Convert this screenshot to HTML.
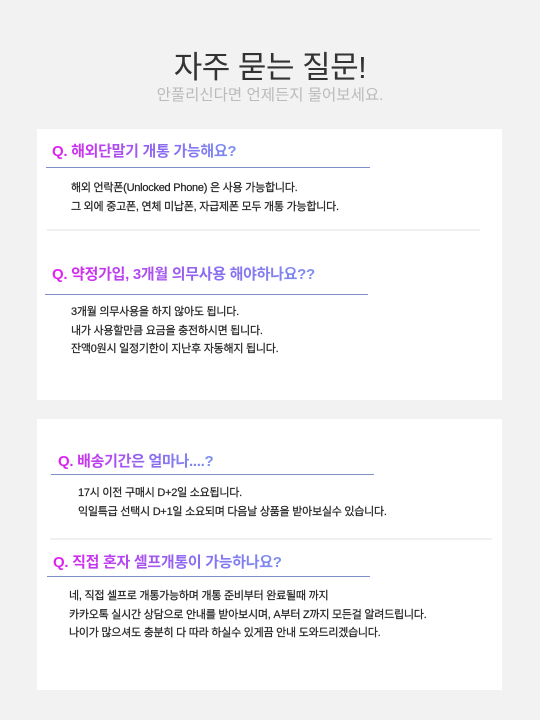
<!DOCTYPE html>
<html><head><meta charset="utf-8"><style>
*{margin:0;padding:0;box-sizing:border-box}
body{width:540px;height:720px;background:#f2f2f2;position:relative;overflow:hidden;font-family:"Liberation Sans","Noto Sans CJK KR",sans-serif}
.a{position:absolute;white-space:nowrap}
.card{position:absolute;left:37px;width:465px;background:#fff}
.q{position:absolute;white-space:nowrap;font-size:15px;letter-spacing:-0.3px;font-weight:bold;background:linear-gradient(90deg,#e020f0,#8a6cf0 60%,#7b8ef0);-webkit-background-clip:text;background-clip:text;color:transparent;line-height:20px}
.ln{position:absolute;height:1px;background:#7d8fc4}
.sep{position:absolute;height:2px;background:#f0f0f0}
.t{position:absolute;white-space:nowrap;font-size:11px;letter-spacing:-0.25px;color:#222;line-height:18.5px;-webkit-text-stroke:0.2px #222}
</style></head><body>
<div class="a" style="left:0;width:540px;text-align:center;top:48px;font-size:31px;letter-spacing:-0.5px;color:#333;line-height:40px">자주 묻는 질문!</div>
<div class="a" style="left:0;width:540px;text-align:center;top:86px;font-size:15.5px;color:#bbb;line-height:20px">안풀리신다면 언제든지 물어보세요.</div>

<div class="card" style="top:129px;height:271px"></div>
<div class="card" style="top:419px;height:271px"></div>

<div class="q" style="left:52px;top:142px">Q. 해외단말기 개통 가능해요?</div>
<div class="ln" style="left:46px;top:167px;width:324px"></div>
<div class="t" style="left:71px;top:179px">해외 언락폰(Unlocked Phone) 은 사용 가능합니다.<br>그 외에 중고폰, 연체 미납폰, 자급제폰 모두 개통 가능합니다.</div>
<div class="sep" style="left:47px;top:229px;width:433px"></div>

<div class="q" style="left:52px;top:265px">Q. 약정가입, 3개월 의무사용 해야하나요??</div>
<div class="ln" style="left:45px;top:294px;width:323px"></div>
<div class="t" style="left:71px;top:303px">3개월 의무사용을 하지 않아도 됩니다.<br>내가 사용할만큼 요금을 충전하시면 됩니다.<br>잔액0원시 일정기한이 지난후 자동해지 됩니다.</div>

<div class="q" style="left:58px;top:452px">Q. 배송기간은 얼마나....?</div>
<div class="ln" style="left:51px;top:474px;width:323px"></div>
<div class="t" style="left:78px;top:484px">17시 이전 구매시 D+2일 소요됩니다.<br>익일특급 선택시 D+1일 소요되며 다음날 상품을 받아보실수 있습니다.</div>
<div class="sep" style="left:50px;top:538px;width:442px"></div>

<div class="q" style="left:53px;top:553px">Q. 직접 혼자 셀프개통이 가능하나요?</div>
<div class="ln" style="left:47px;top:576px;width:323px"></div>
<div class="t" style="left:69px;top:587px">네, 직접 셀프로 개통가능하며 개통 준비부터 완료될때 까지<br>카카오톡 실시간 상담으로 안내를 받아보시며, A부터 Z까지 모든걸 알려드립니다.<br>나이가 많으셔도 충분히 다 따라 하실수 있게끔 안내 도와드리겠습니다.</div>
</body></html>
